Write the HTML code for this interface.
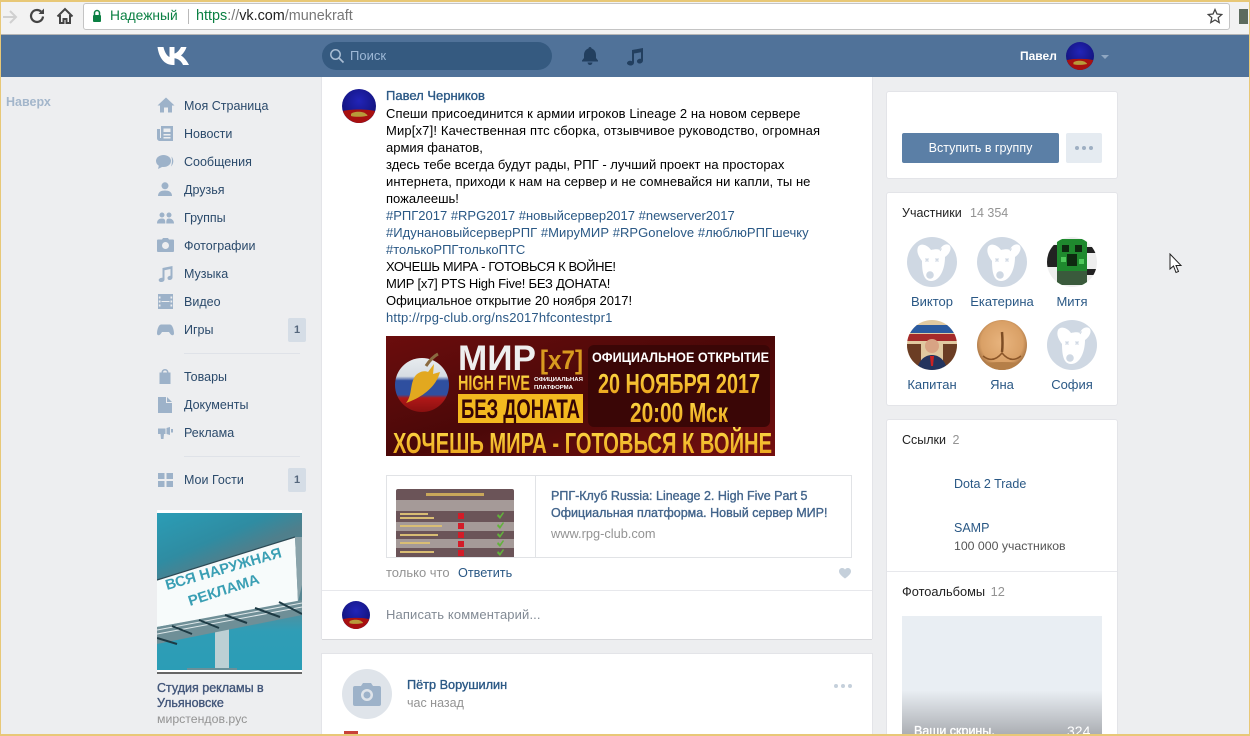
<!DOCTYPE html>
<html><head><meta charset="utf-8">
<style>
html,body{margin:0;padding:0;width:1250px;height:736px;overflow:hidden;background:#edeef0}
body{position:relative;font-family:"Liberation Sans","Noto Sans CJK SC",sans-serif;font-size:13px;color:#000}
.a{position:absolute}
.t{position:absolute;white-space:nowrap;line-height:16px;height:16px}
.body{left:386px;font-size:13px;color:#000}
.l,.body.l{color:#2a5885}
.m{color:#2b4a6b;font-size:12.500px}
.g{color:#939393}
.med{-webkit-text-stroke:.35px currentColor}
.card{position:absolute;background:#fff;box-shadow:0 0 0 1px #e3e4e8;border-radius:2px}
svg{position:absolute;overflow:hidden}
.ic path,.ic circle,.ic rect{fill:#9db2c9}
.n{position:absolute;width:70px;text-align:center;color:#2a5885;font-size:13px;line-height:16px;white-space:nowrap}
.bd{position:absolute;left:288px;width:18px;height:24px;background:#d5dde6;border-radius:2px;color:#55677d;font-size:11px;font-weight:bold;text-align:center;line-height:24px}
</style></head><body>

<!-- browser toolbar -->
<div class="a" style="left:0;top:0;width:1250px;height:34px;background:#f2f2f2"></div>
<div class="a" style="left:0;top:34px;width:1250px;height:1px;background:#b5b5b5"></div>
<div class="a" style="left:83px;top:3px;width:1145px;height:25px;background:#fff;border:1px solid #c4c4c4;border-radius:3px"></div>
<svg style="left:2px;top:8px" width="16" height="18" viewBox="0 0 16 18"><path d="M1 9H14M8 3l6 6-6 6" fill="none" stroke="#d0d0d0" stroke-width="2"/></svg>
<svg style="left:28px;top:7px" width="18" height="18" viewBox="0 0 18 18"><path d="M15 9.500A6 6 0 1 1 13 4.500" fill="none" stroke="#444" stroke-width="2.200"/><path d="M10.500 7H16V1.500Z" fill="#444"/></svg>
<svg style="left:56px;top:7px" width="18" height="18" viewBox="0 0 18 18"><path d="M1.500 9.500L9 2l7.500 7.500M4 8v8h3.500v-4h3v4H14V8" fill="none" stroke="#444" stroke-width="2"/></svg>
<svg style="left:92px;top:9px" width="10" height="14" viewBox="0 0 10 14"><path d="M2.500 6V4a2.500 2.500 0 0 1 5 0v2" fill="none" stroke="#0b8043" stroke-width="1.500"/><rect x="1" y="6" width="8" height="7" rx="1" fill="#0b8043"/></svg>
<div class="t" style="left:110px;top:8px;color:#0b8043;font-size:13.800px">Надежный</div>
<div class="a" style="left:188px;top:9px;width:1px;height:15px;background:#b9b9b9"></div>
<div class="t" style="left:196px;top:8px;font-size:14.400px;color:#777"><span style="color:#0b8043">https</span>://<span style="color:#222">vk.com</span>/munekraft</div>
<svg style="left:1207px;top:8px" width="16" height="16" viewBox="0 0 16 16"><path d="M8 1.500l2 4.500 4.800.5-3.600 3.200 1 4.800L8 12l-4.200 2.500 1-4.800L1.200 6.500 6 6z" fill="none" stroke="#444" stroke-width="1.300"/></svg>
<div class="a" style="left:1239px;top:9px;width:9px;height:15px;background:#5d6b5e"></div>

<!-- vk header -->
<div class="a" style="left:0;top:35px;width:1250px;height:42px;background:#507299"></div>
<svg style="left:157px;top:46px" width="33" height="20" viewBox="0 0 33 20"><path d="M0.500 1H6.500C7.500 6 10 10 12.500 11V1H17.500V7.500C20 7 22.500 4 24 1H29.500C28.500 4.500 26 7.800 24 9.500C26.500 11 29.500 14 32 19H26C24.500 15.500 21.500 12.800 17.500 12.300V19H16C7.500 19 2 12 0.500 1Z" fill="#fff"/></svg>
<div class="a" style="left:322px;top:42px;width:230px;height:28px;background:#355a80;border-radius:14px"></div>
<svg style="left:329px;top:48px" width="16" height="16" viewBox="0 0 16 16"><circle cx="6.500" cy="6.500" r="4.700" fill="none" stroke="#a9bdd3" stroke-width="1.500"/><path d="M10 10l4.500 4.500" stroke="#a9bdd3" stroke-width="1.700"/></svg>
<div class="t" style="left:350px;top:48px;color:#9db8d6;font-size:13px">Поиск</div>
<svg style="left:581px;top:46px" width="18" height="20" viewBox="0 0 18 20"><path d="M9 1c1 0 1.500.7 1.600 1.500C13.500 3.400 15 6 15 9v3l2 2.500V15.500H1v-1L3 12V9c0-3 1.500-5.600 4.400-6.500C7.500 1.700 8 1 9 1zM6.500 16.500h5C11.300 18 10.300 19 9 19s-2.300-1-2.500-2.500z" fill="#223f5f"/></svg>
<svg style="left:626px;top:47px" width="18" height="19" viewBox="0 0 18 19"><path d="M6 3l11-2v12.500c0 1.700-1.600 3-3.300 3s-2.700-1-2.700-2.300 1.400-2.500 3-2.500c.4 0 .8 0 1 .2V5.300L8 6.500V15.500c0 1.700-1.500 3-3.200 3S1 17.500 1 16.200s1.500-2.400 3.200-2.400c.6 0 1.300.1 1.800.4z" fill="#223f5f"/></svg>
<div class="t" style="left:1020px;top:48px;color:#fff;font-size:12px;font-weight:bold">Павел</div>
<svg width="0" height="0" style="position:absolute"><defs>
<radialGradient id="blu" cx=".5" cy=".35" r=".7"><stop offset="0" stop-color="#2224b8"/><stop offset="1" stop-color="#0f1070"/></radialGradient>
<g id="ava"><circle cx="17" cy="17" r="17" fill="url(#blu)"/><path d="M1 22C8 20 26 20 33 22 31 29 24 34 17 34S3 29 1 22Z" fill="#a81010"/><path d="M9 25c2-3 13-3 15 0 2 1 2 2 0 2-4 1-12 1-15 0z" fill="#b89a3a"/></g>
<g id="dog"><rect width="50" height="50" fill="#cfd8e3"/><path d="M11 10C13 6 20 7 24 13 28 12 31 12 33 13 35 7 41 6 43 9 45 13 41 18 38 20 38 32 33 44 24 44 17 44 15 36 15 24 12 20 9 15 11 10Z" fill="#fff"/><circle cx="23" cy="38" r="3.800" fill="#cfd8e3"/><path d="M18.500 21.500l3 3m0-3l-3 3M28.500 21.500l3 3m0-3l-3 3" stroke="#cfd8e3" stroke-width="1.400"/><path d="M33 14l1.500-2.500" stroke="#cfd8e3" stroke-width="1"/></g>
<radialGradient id="ya" cx=".5" cy=".45" r=".6"><stop offset="0" stop-color="#e8b47e"/><stop offset=".7" stop-color="#d9a066"/><stop offset="1" stop-color="#8a5a30"/></radialGradient>
<linearGradient id="ad" x1="0" y1="0" x2=".4" y2="1"><stop offset="0" stop-color="#2b9db6"/><stop offset=".28" stop-color="#2f8ca2"/><stop offset=".42" stop-color="#4f7f8c"/><stop offset="1" stop-color="#5b8995"/></linearGradient>
<linearGradient id="adb" x1="0" y1="0" x2="0" y2="1"><stop offset="0" stop-color="#5f8a96"/><stop offset=".4" stop-color="#2f9db6"/><stop offset="1" stop-color="#2b9db6"/></linearGradient>
<linearGradient id="b" x1="0" y1="0" x2="1" y2="1"><stop offset="0" stop-color="#6b0d0d"/><stop offset=".5" stop-color="#4a0808"/><stop offset="1" stop-color="#751010"/></linearGradient>
<linearGradient id="gl" x1="0" y1="0" x2="0" y2="1"><stop offset="0" stop-color="#e8ecef"/><stop offset=".34" stop-color="#d6dde3"/><stop offset=".42" stop-color="#2f4f9f"/><stop offset=".68" stop-color="#2f4f9f"/><stop offset=".74" stop-color="#b01818"/><stop offset="1" stop-color="#8a1010"/></linearGradient>
<linearGradient id="my" x1="0" y1="0" x2="0" y2="1"><stop offset="0" stop-color="#ffe04a"/><stop offset="1" stop-color="#e89a15"/></linearGradient>
</defs></svg>
<svg style="left:1066px;top:42px" width="28" height="28" viewBox="0 0 34 34"><use href="#ava"/></svg>
<svg style="left:1100px;top:54px" width="10" height="6" viewBox="0 0 10 6"><path d="M1 1h8L5 5z" fill="#8fa7c2"/></svg>

<!-- left: up -->
<div class="t" style="left:6px;top:94px;color:#a3b6cb;font-weight:bold;font-size:12.500px">Наверх</div>

<!-- sidebar icons -->
<svg class="ic" style="left:156px;top:96px" width="20" height="18" viewBox="0 0 20 18"><path d="M10 1.500L18.500 9.500H16V16.500H12V11.500H8V16.500H4V9.500H1.500Z"/></svg>
<svg class="ic" style="left:157px;top:126px" width="16" height="15" viewBox="0 0 16 15"><path d="M4 0H16V15H3C1.500 15 0 14 0 12V3H3V12H4zM6.500 2.500V6H13.500V2.500zM6.500 8V9.500H13.500V8zM6.500 11V12.500H13.500V11z" fill-rule="evenodd"/></svg>
<svg class="ic" style="left:156px;top:154px" width="18" height="15" viewBox="0 0 18 15"><ellipse cx="7.500" cy="7" rx="7.500" ry="6" style="fill:#9db2c9"/><path d="M3 11L2 15 7 12.500zM15.500 2.500C18 5.500 18 9.500 15 12.500 16.200 9 16.200 6 15.500 2.500Z"/></svg>
<svg class="ic" style="left:158px;top:182px" width="14" height="15" viewBox="0 0 14 15"><circle cx="7" cy="3.800" r="3.500"/><path d="M0 14c0-4 3-5.500 7-5.500s7 1.500 7 5.500z"/></svg>
<svg class="ic" style="left:157px;top:212px" width="17" height="12" viewBox="0 0 17 12"><circle cx="5" cy="3" r="2.500"/><circle cx="12" cy="3" r="2.500"/><path d="M0 11.500C0 8 2 6.500 5 6.500S8.300 8 8.300 11.500zM9.300 11.500C9.300 8 9.500 6.500 12 6.500S17 8 17 11.500z"/></svg>
<svg class="ic" style="left:157px;top:238px" width="17" height="14" viewBox="0 0 17 14"><path d="M5 1.500L6 0H11L12 1.500H16Q17 1.500 17 2.500V13Q17 14 16 14H1Q0 14 0 13V2.500Q0 1.500 1 1.500ZM8.500 4A3.500 3.500 0 1 0 8.500 11 3.500 3.500 0 1 0 8.500 4Z" fill-rule="evenodd"/></svg>
<svg class="ic" style="left:158px;top:266px" width="15" height="16" viewBox="0 0 15 16"><path d="M4.500 2L14.500 0V11.500C14.500 13 13 14 11.500 14S9.500 13 9.500 12 10.800 9.800 12.500 9.800V3L6.500 4.200V13.500C6.500 15 5 16 3.200 16S.7 15 .7 14 2 11.800 4.500 11.800Z"/></svg>
<svg class="ic" style="left:158px;top:294px" width="15" height="15" viewBox="0 0 15 15"><path d="M0 0H15V15H0ZM.8 2.500V4.500H2.500V2.500ZM12.500 2.500V4.500H14.200V2.500ZM.8 6.500V8.500H2.500V6.500ZM12.500 6.500V8.500H14.200V6.500ZM.8 10.500V12.500H2.500V10.500ZM12.500 10.500V12.500H14.200V10.500ZM3.500 7V8H11.500V7Z" fill-rule="evenodd"/></svg>
<svg class="ic" style="left:157px;top:324px" width="17" height="12" viewBox="0 0 17 12"><path d="M4 .5H13C15 .5 17 5 17 9.500 17 11.500 14.500 12 13 9.500L12 8H5L4 9.500C2.500 12 0 11.500 0 9.500 0 5 2 .5 4 .5Z"/></svg>
<svg class="ic" style="left:158px;top:369px" width="14" height="15" viewBox="0 0 14 15"><path d="M3.500 3.500C3.500 1.500 5 0 7 0S10.500 1.500 10.500 3.500H12.500V15H1.500V3.500ZM5 3.500H9C9 2.300 8 1.500 7 1.500S5 2.300 5 3.500Z" fill-rule="evenodd"/></svg>
<svg class="ic" style="left:158px;top:397px" width="14" height="16" viewBox="0 0 14 16"><path d="M0 0H8V6H14V16H0ZM9 0L14 5H9Z"/></svg>
<svg class="ic" style="left:158px;top:427px" width="15" height="12" viewBox="0 0 15 12"><path d="M0 1.500H7.500V7H6L5.500 12H3L2.500 7H0ZM8.500 1L12 0V8L8.500 7ZM13 2H15V5.500H13Z"/></svg>
<svg class="ic" style="left:158px;top:473px" width="15" height="14" viewBox="0 0 15 14"><rect width="6.500" height="6"/><rect x="8.500" width="6.500" height="6"/><rect y="8" width="6.500" height="6"/><rect x="8.500" y="8" width="6.500" height="6"/></svg>

<!-- sidebar labels -->
<div class="t m" style="left:184px;top:98px">Моя Страница</div>
<div class="t m" style="left:184px;top:126px">Новости</div>
<div class="t m" style="left:184px;top:154px">Сообщения</div>
<div class="t m" style="left:184px;top:182px">Друзья</div>
<div class="t m" style="left:184px;top:210px">Группы</div>
<div class="t m" style="left:184px;top:238px">Фотографии</div>
<div class="t m" style="left:184px;top:266px">Музыка</div>
<div class="t m" style="left:184px;top:294px">Видео</div>
<div class="t m" style="left:184px;top:322px">Игры</div>
<div class="bd" style="top:318px">1</div>
<div class="a" style="left:184px;top:353px;width:116px;height:1px;background:#dfe2e8"></div>
<div class="t m" style="left:184px;top:369px">Товары</div>
<div class="t m" style="left:184px;top:397px">Документы</div>
<div class="t m" style="left:184px;top:425px">Реклама</div>
<div class="a" style="left:184px;top:456px;width:116px;height:1px;background:#dfe2e8"></div>
<div class="t m" style="left:184px;top:472px">Мои Гости</div>
<div class="bd" style="top:468px">1</div>

<!-- ad -->
<svg style="left:157px;top:510px" width="145" height="165" viewBox="0 0 145 165">
<rect y="0" width="145" height="3" fill="#fff"/>
<rect y="3" width="145" height="157" fill="url(#ad)"/>
<rect y="95" width="145" height="65" fill="url(#adb)"/>
<rect x="58" y="110" width="14" height="50" fill="#bcd0d4"/>
<path d="M30 158h50v2H30z" fill="#6a8f98"/>
<path d="M0 70L138 27 141 92 0 117Z" fill="#f7fbfb"/>
<path d="M0 70L138 27" stroke="#2c4a55" stroke-width="1.200"/>
<path d="M138 27H145V75L141 92Z" fill="#8aa3aa"/>
<path d="M0 117L145 90V105L0 134Z" fill="#6f8f97"/>
<path d="M0 120L145 93M0 124L145 97" stroke="#dfe8ea" stroke-width="1"/>
<path d="M15 116l20 8M42 110l20 8M68 105l22 8M98 98l25 9M122 92l23 12M0 128l20 6" stroke="#1d3a44" stroke-width="2"/>
<text transform="translate(10 80) rotate(-16)" font-family="Liberation Sans" font-weight="bold" font-size="14.500" fill="#3a9fb4" textLength="120" lengthAdjust="spacingAndGlyphs">ВСЯ НАРУЖНАЯ</text>
<text transform="translate(33 96) rotate(-18)" font-family="Liberation Sans" font-weight="bold" font-size="14.500" fill="#3a9fb4" textLength="74" lengthAdjust="spacingAndGlyphs">РЕКЛАМА</text>
<rect y="160" width="145" height="2" fill="#fff"/>
<rect y="162" width="145" height="2" fill="#666"/>
</svg>
<div class="t med" style="left:157px;top:680px;font-size:12.500px;color:#42567a">Студия рекламы в</div>
<div class="t med" style="left:157px;top:695px;font-size:12.500px;color:#42567a">Ульяновске</div>
<div class="t g" style="left:157px;top:711px;font-size:12.300px">мирстендов.рус</div>

<!-- post card -->
<div class="a" style="left:322px;top:77px;width:550px;height:562px;background:#fff;box-shadow:0 1px 0 0 #d7d8db,1px 0 0 0 #e3e4e8,-1px 0 0 0 #e3e4e8"></div>
<svg style="left:342px;top:89px" width="34" height="34" viewBox="0 0 34 34"><use href="#ava"/></svg>
<div class="t l med" style="left:386px;top:88px;font-size:13px">Павел Черников</div>
<div class="t body" style="top:106px;letter-spacing:.08px">Спеши присоединится к армии игроков Lineage 2 на новом сервере</div>
<div class="t body" style="top:123px;letter-spacing:.15px">Мир[x7]! Качественная птс сборка, отзывчивое руководство, огромная</div>
<div class="t body" style="top:140px">армия фанатов,</div>
<div class="t body" style="top:157px;letter-spacing:.02px">здесь тебе всегда будут рады, РПГ - лучший проект на просторах</div>
<div class="t body" style="top:174px;letter-spacing:.06px">интернета, приходи к нам на сервер и не сомневайся ни капли, ты не</div>
<div class="t body" style="top:191px">пожалеешь!</div>
<div class="t body l" style="top:208px">#РПГ2017 #RPG2017 #новыйсервер2017 #newserver2017</div>
<div class="t body l" style="top:225px;letter-spacing:.05px">#ИдунановыйсерверРПГ #МируМИР #RPGonelove #люблюРПГшечку</div>
<div class="t body l" style="top:242px">#толькоРПГтолькоПТС</div>
<div class="t body" style="top:259px;letter-spacing:-.38px">ХОЧЕШЬ МИРА - ГОТОВЬСЯ К ВОЙНЕ!</div>
<div class="t body" style="top:276px;letter-spacing:-.23px">МИР [x7] PTS High Five! БЕЗ ДОНАТА!</div>
<div class="t body" style="top:293px">Официальное открытие 20 ноября 2017!</div>
<div class="t body l" style="top:310px;letter-spacing:.18px">http://rpg-club.org/ns2017hfcontestpr1</div>

<!-- banner -->
<svg style="left:386px;top:336px" width="389" height="120" viewBox="0 0 389 120">
<rect width="389" height="120" fill="url(#b)"/>
<rect x="202" y="9" width="182" height="82" rx="6" fill="#3a0606"/>
<circle cx="36" cy="49" r="27" fill="url(#gl)"/>
<path d="M20 67C26 60 24 50 28 42 31 36 38 34 42 36L48 28 47 38 54 36C51 48 40 60 20 67Z" fill="#e2a81f"/>
<path d="M40 30C44 24 48 20 52 18" stroke="#8a6a40" stroke-width="3" fill="none"/>
<text x="72" y="34" font-family="Liberation Sans" font-weight="bold" font-size="35" fill="#eeeeee" textLength="78" lengthAdjust="spacingAndGlyphs">МИР</text>
<text x="154" y="33" font-family="Liberation Sans" font-weight="bold" font-size="27" fill="#d99a1f" textLength="43" lengthAdjust="spacingAndGlyphs">[x7]</text>
<text x="72" y="54" font-family="Liberation Sans" font-weight="bold" font-size="21" fill="url(#my)" textLength="72" lengthAdjust="spacingAndGlyphs">HIGH FIVE</text>
<text x="148" y="45" font-family="Liberation Sans" font-weight="bold" font-size="5.500" fill="#fff" textLength="49" lengthAdjust="spacingAndGlyphs">ОФИЦИАЛЬНАЯ</text>
<text x="148" y="53" font-family="Liberation Sans" font-weight="bold" font-size="5.500" fill="#fff" textLength="39" lengthAdjust="spacingAndGlyphs">ПЛАТФОРМА</text>
<rect x="72" y="58" width="125" height="29" fill="#f4b91f"/>
<text x="75" y="82" font-family="Liberation Sans" font-weight="bold" font-size="27" fill="#350505" textLength="119" lengthAdjust="spacingAndGlyphs">БЕЗ ДОНАТА</text>
<text x="206" y="26" font-family="Liberation Sans" font-weight="bold" font-size="14" fill="#fff" textLength="177" lengthAdjust="spacingAndGlyphs">ОФИЦИАЛЬНОЕ ОТКРЫТИЕ</text>
<text x="212" y="57" font-family="Liberation Sans" font-weight="bold" font-size="28" fill="url(#my)" textLength="162" lengthAdjust="spacingAndGlyphs">20 НОЯБРЯ 2017</text>
<text x="244" y="86" font-family="Liberation Sans" font-weight="bold" font-size="28" fill="url(#my)" textLength="98" lengthAdjust="spacingAndGlyphs">20:00 Мск</text>
<text x="7" y="117" font-family="Liberation Sans" font-weight="bold" font-size="29" fill="url(#my)" textLength="379" lengthAdjust="spacingAndGlyphs">ХОЧЕШЬ МИРА - ГОТОВЬСЯ К ВОЙНЕ</text>
</svg>

<!-- link box -->
<div class="a" style="left:386px;top:475px;width:464px;height:81px;border:1px solid #e1e3e6;background:#fff"></div>
<div class="a" style="left:535px;top:476px;width:1px;height:81px;background:#e1e3e6"></div>
<svg style="left:396px;top:489px" width="118" height="68" viewBox="0 0 118 68">
<path d="M2 0H116Q118 0 118 2V68H0V2Q0 0 2 0Z" fill="#6b5458"/>
<rect y="11" width="118" height="11" fill="#a59a98"/>
<rect y="33" width="118" height="9" fill="#a59a98"/>
<rect y="50" width="118" height="9" fill="#a59a98"/>
<rect x="30" y="4" width="58" height="3" fill="#c9a75a"/>
<g fill="#d9bd74"><rect x="4" y="24" width="28" height="2"/><rect x="4" y="28" width="34" height="2"/><rect x="4" y="36" width="42" height="2"/><rect x="4" y="45" width="38" height="2"/><rect x="4" y="53" width="30" height="2"/><rect x="4" y="62" width="34" height="2"/></g>
<g fill="#d21c28"><rect x="62" y="24" width="6" height="6"/><rect x="62" y="34" width="6" height="6"/><rect x="62" y="43" width="6" height="6"/><rect x="62" y="52" width="6" height="6"/><rect x="62" y="61" width="6" height="6"/></g>
<g fill="#62b13c"><path d="M101 27l3 3 4-6-1-1-3 4-2-2z"/><path d="M101 37l3 3 4-6-1-1-3 4-2-2z"/><path d="M101 46l3 3 4-6-1-1-3 4-2-2z"/><path d="M101 55l3 3 4-6-1-1-3 4-2-2z"/><path d="M101 64l3 3 4-6-1-1-3 4-2-2z"/></g>
</svg>
<div class="t med" style="left:551px;top:488px;font-size:12.500px;color:#42648b">РПГ-Клуб Russia: Lineage 2. High Five Part 5</div>
<div class="t med" style="left:551px;top:505px;font-size:12.500px;color:#42648b">Официальная платформа. Новый сервер МИР!</div>
<div class="t g" style="left:551px;top:526px;font-size:12.800px">www.rpg-club.com</div>

<div class="t g" style="left:386px;top:565px">только что</div>
<div class="t l" style="left:458px;top:565px;font-size:12.700px">Ответить</div>
<svg style="left:839px;top:568px" width="12" height="11" viewBox="0 0 12 11"><path d="M6 10.500C2 7.500 0 5.500 0 3.200 0 1.300 1.500 0 3.200 0 4.400 0 5.400.6 6 1.600 6.600.6 7.600 0 8.800 0 10.500 0 12 1.300 12 3.200 12 5.500 10 7.500 6 10.500Z" fill="#c5d0db"/></svg>
<div class="a" style="left:322px;top:590px;width:550px;height:1px;background:#e7e8ec"></div>
<svg style="left:342px;top:601px" width="28" height="28" viewBox="0 0 34 34"><use href="#ava"/></svg>
<div class="t g" style="left:386px;top:607px;color:#828a94;letter-spacing:.13px">Написать комментарий...</div>

<!-- second post -->
<div class="a" style="left:322px;top:654px;width:550px;height:90px;background:#fff;box-shadow:0 0 0 1px #e3e4e8"></div>
<div class="a" style="left:342px;top:669px;width:50px;height:50px;border-radius:50%;background:#dfe4ea"></div>
<svg style="left:353px;top:683px" width="28" height="23" viewBox="0 0 28 23"><path d="M8 3L10 0H18L20 3H26Q28 3 28 5V21Q28 23 26 23H2Q0 23 0 21V5Q0 3 2 3ZM14 6A6 6 0 1 0 14 18 6 6 0 1 0 14 6ZM14 8.500A3.500 3.500 0 1 1 14 15.500 3.500 3.500 0 1 1 14 8.500Z" fill="#9db2c9" fill-rule="evenodd"/></svg>
<div class="t l med" style="left:407px;top:677px;font-size:12.700px">Пётр Ворушилин</div>
<div class="t g" style="left:407px;top:695px;font-size:12.500px">час назад</div>
<svg style="left:833px;top:683px" width="20" height="6" viewBox="0 0 20 6"><circle cx="3" cy="3" r="2" fill="#c5d0db"/><circle cx="10" cy="3" r="2" fill="#c5d0db"/><circle cx="17" cy="3" r="2" fill="#c5d0db"/></svg>
<div class="a" style="left:344px;top:731px;width:14px;height:3px;background:#c8423a"></div>

<!-- right column -->
<div class="card" style="left:887px;top:92px;width:230px;height:86px"></div>
<div class="a" style="left:902px;top:133px;width:157px;height:30px;background:#5b7fa6;border-radius:2px;color:#fff;text-align:center;line-height:30px;font-size:12.500px">Вступить в группу</div>
<div class="a" style="left:1066px;top:133px;width:36px;height:30px;background:#e5ebf1;border-radius:2px"></div>
<svg style="left:1074px;top:145px" width="20" height="6" viewBox="0 0 20 6"><circle cx="3" cy="3" r="2" fill="#9eafc3"/><circle cx="10" cy="3" r="2" fill="#9eafc3"/><circle cx="17" cy="3" r="2" fill="#9eafc3"/></svg>

<div class="card" style="left:887px;top:193px;width:230px;height:212px"></div>
<div class="t" style="left:902px;top:205px;font-size:12.500px;color:#222">Участники</div>
<div class="t g" style="left:970px;top:205px;font-size:12.500px">14 354</div>

<!-- members -->
<svg style="left:907px;top:237px;border-radius:50%" width="50" height="50" viewBox="0 0 50 50"><use href="#dog"/></svg>
<svg style="left:977px;top:237px;border-radius:50%" width="50" height="50" viewBox="0 0 50 50"><use href="#dog"/></svg>
<svg style="left:1047px;top:320px;border-radius:50%" width="50" height="50" viewBox="0 0 50 50"><use href="#dog"/></svg>
<svg style="left:1047px;top:237px;border-radius:50%" width="50" height="50" viewBox="0 0 50 50"><rect width="50" height="50" fill="#eee"/><rect x="0" y="8" width="12" height="22" fill="#222"/><rect x="10" y="2" width="30" height="46" fill="#1f8a2e"/><rect x="15" y="8" width="7" height="7" fill="#0e2a10"/><rect x="28" y="8" width="7" height="7" fill="#0e2a10"/><rect x="20" y="17" width="10" height="12" fill="#0e2a10"/><rect x="10" y="34" width="30" height="14" fill="#3a5a3c"/><rect x="40" y="10" width="10" height="6" fill="#222"/><rect x="40" y="32" width="10" height="6" fill="#222"/><rect x="14" y="20" width="5" height="5" fill="#50c95c"/><rect x="32" y="22" width="5" height="5" fill="#50c95c"/></svg>
<svg style="left:907px;top:320px;border-radius:50%" width="50" height="50" viewBox="0 0 50 50"><rect width="50" height="50" fill="#e0c9a0"/><rect y="5" width="50" height="8" fill="#2b5a9e"/><rect y="14" width="50" height="7" fill="#a52a2a"/><rect y="24" width="14" height="26" fill="#6b3d24"/><rect x="36" y="24" width="14" height="26" fill="#6b3d24"/><circle cx="25" cy="26" r="7" fill="#d8a484"/><path d="M10 50C12 38 20 35 25 35 30 35 38 38 40 50Z" fill="#24345e"/><path d="M23 36h4l-1 10h-2z" fill="#c22"/></svg>
<svg style="left:977px;top:320px;border-radius:50%" width="50" height="50" viewBox="0 0 50 50"><rect width="50" height="50" fill="url(#ya)"/><path d="M25 12Q26 24 25 32" stroke="#7d4d24" stroke-width="2.500" fill="none"/><path d="M6 36Q16 44 25 33 34 44 44 36" stroke="#8a5528" stroke-width="1.500" fill="none"/><path d="M0 44Q25 40 50 44V50H0Z" fill="#b57f48"/></svg>

<div class="n" style="left:897px;top:294px">Виктор</div>
<div class="n" style="left:967px;top:294px">Екатерина</div>
<div class="n" style="left:1037px;top:294px">Митя</div>
<div class="n" style="left:897px;top:377px">Капитан</div>
<div class="n" style="left:967px;top:377px">Яна</div>
<div class="n" style="left:1037px;top:377px">София</div>

<div class="card" style="left:887px;top:420px;width:230px;height:330px"></div>
<div class="t" style="left:902px;top:432px;font-size:12.500px;color:#222">Ссылки <span class="g" style="margin-left:3px">2</span></div>
<div class="t l" style="left:954px;top:476px;font-size:12.500px">Dota 2 Trade</div>
<div class="t l" style="left:954px;top:520px;font-size:12.500px">SAMP</div>
<div class="t" style="left:954px;top:538px;font-size:12.300px;color:#555">100 000 участников</div>
<div class="a" style="left:887px;top:571px;width:230px;height:1px;background:#e7e8ec"></div>
<div class="t" style="left:902px;top:584px;font-size:12.800px;color:#222">Фотоальбомы <span class="g" style="margin-left:2px">12</span></div>
<div class="a" style="left:902px;top:616px;width:200px;height:120px;background:linear-gradient(to bottom,#e9eef3 0,#e9eef3 62%,#a9acb1 100%)"></div>
<div class="t med" style="left:914px;top:723px;color:#fff;font-size:12.500px">Ваши скрины.</div>
<div class="t" style="left:1067px;top:723px;color:#fff;font-size:14px">324</div>

<!-- window border -->
<div class="a" style="left:0;top:0;width:1250px;height:2px;background:#e8c877"></div>
<div class="a" style="left:0;top:0;width:1px;height:736px;background:#e8c877"></div>
<div class="a" style="left:1249px;top:0;width:1px;height:736px;background:#e8c877"></div>
<div class="a" style="left:0;top:734px;width:1250px;height:2px;background:#e8c877"></div>

<!-- cursor -->
<svg style="left:1169px;top:253px" width="14" height="21" viewBox="0 0 14 21"><path d="M1 1V16L4.500 13 7 19.500 9.500 18.500 7 12.500H12Z" fill="#fff" stroke="#222" stroke-width="1"/></svg>
</body></html>
